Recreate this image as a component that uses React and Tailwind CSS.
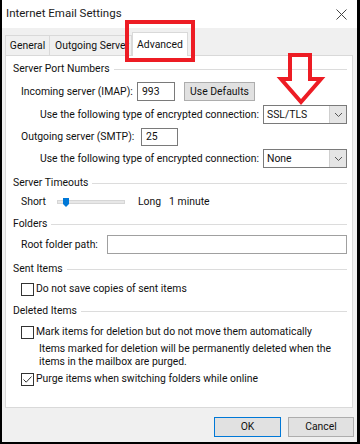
import React from "react";

const font = { fontFamily: 'Roboto, "Noto Sans", sans-serif' };

// --- small pieces ---
const SectionHeader = ({ title, className = "" }) => (
  <div className={`flex items-center h-[18px] pl-[7px] pr-[5px] whitespace-nowrap ${className}`}>
    <span>{title}</span>
    <div className="flex-1 ml-[4px] border-t border-[#dcdcdc]" />
  </div>
);

const Checkbox = ({ checked }) => (
  <div className="w-[13px] h-[13px] border border-[#333333] bg-white flex items-center justify-center shrink-0">
    {checked && (
      <svg width="11" height="11" viewBox="0 0 11 11">
        <path d="M1.5 5.5 L4.2 8.2 L9.5 2.5" fill="none" stroke="#333" strokeWidth="1" />
      </svg>
    )}
  </div>
);

const Select = ({ value }) => (
  <div className="w-[84px] h-[19px] border border-[#7a7a7a] bg-white flex items-stretch">
    <span className="flex-1 pl-[3px] leading-[17px]">{value}</span>
    <div className="w-[17px] bg-[#e5e5e5] border-l border-[#cfcfcf] flex items-center justify-center">
      <svg width="9" height="6" viewBox="0 0 9 6">
        <path d="M1 1 L4.5 4.5 L8 1" fill="none" stroke="#555" strokeWidth="1" />
      </svg>
    </div>
  </div>
);

const App = () => {
  return (
    <div
      className="relative w-[360px] h-[444px] bg-[#f0f0f0] border-l-2 border-r-[3px] border-b-2 border-black flex flex-col text-[10.4px] text-[#111] overflow-hidden"
      style={font}
    >
      {/* Title bar */}
      <div className="h-[28px] bg-white flex items-center justify-between pl-[4px] pr-[10px] shrink-0">
        <span className="text-[11.5px] text-[#1a1a1a]">Internet Email Settings</span>
        <svg width="11" height="11" viewBox="0 0 11 11">
          <path d="M0.5 0.5 L10.5 10.5 M10.5 0.5 L0.5 10.5" stroke="#444" strokeWidth="1" />
        </svg>
      </div>

      {/* Tabs */}
      <div className="h-[27px] flex items-end pl-[3px] shrink-0 whitespace-nowrap">
        <div className="w-[45px] h-[20px] border border-b-0 border-[#d9d9d9] flex items-center justify-center">General</div>
        <div className="w-[82px] h-[20px] border-t border-r border-[#d9d9d9] flex items-center pl-[5px] overflow-hidden">
          Outgoing Server
        </div>
        <div className="w-[56px] h-[24px] -mb-px bg-white border border-b-0 border-[#d9d9d9] flex items-center justify-center relative z-10">
          Advanced
        </div>
      </div>

      {/* Panel */}
      <div className="ml-[3px] w-[348px] h-[353px] bg-white border border-[#d9d9d9] flex flex-col shrink-0 whitespace-nowrap">
        <SectionHeader title="Server Port Numbers" className="mt-[4px]" />

        <div className="flex items-center h-[19px] mt-[4px] pl-[15px]">
          <span className="w-[116px]">Incoming server (IMAP):</span>
          <div className="w-[38px] h-[19px] border border-[#7a7a7a] pl-[4px] leading-[17px]">993</div>
          <div className="ml-[9px] w-[71px] h-[19px] bg-[#e1e1e1] border border-[#adadad] flex items-center justify-center">
            Use Defaults
          </div>
        </div>

        <div className="flex items-center h-[19px] mt-[4px] pl-[34px]">
          <span className="flex-1">Use the following type of encrypted connection:</span>
          <div className="mr-[5px]">
            <Select value="SSL/TLS" />
          </div>
        </div>

        <div className="flex items-center h-[18px] mt-[4px] pl-[15px]">
          <span className="w-[120px]">Outgoing server (SMTP):</span>
          <div className="w-[37px] h-[18px] border border-[#7a7a7a] pl-[4px] leading-[16px]">25</div>
        </div>

        <div className="flex items-center h-[19px] mt-[3px] pl-[34px]">
          <span className="flex-1">Use the following type of encrypted connection:</span>
          <div className="mr-[5px]">
            <Select value="None" />
          </div>
        </div>

        <SectionHeader title="Server Timeouts" className="mt-[6px]" />

        <div className="flex items-center h-[18px] mt-[1px] pl-[15px]">
          <span className="w-[36px]">Short</span>
          <div className="relative w-[68px] h-[10px] flex items-center">
            <div className="w-full h-[4px] bg-[#e7e7e7] border border-[#d6d6d6]" />
            <svg className="absolute left-[6px] top-[1px]" width="6" height="9" viewBox="0 0 6 9">
              <path d="M0 0 H6 V6 L3 9 L0 6 Z" fill="#0078d7" />
            </svg>
          </div>
          <span className="ml-[13px]">Long</span>
          <span className="ml-[8px]">1 minute</span>
        </div>

        <SectionHeader title="Folders" className="mt-[4px]" />

        <div className="flex items-center h-[19px] mt-[2px] pl-[15px] pr-[5px]">
          <span className="w-[86px]">Root folder path:</span>
          <div className="flex-1 h-[19px] border border-[#a0a0a0]" />
        </div>

        <SectionHeader title="Sent Items" className="mt-[6px]" />

        <div className="flex items-center h-[18px] mt-[2px] pl-[15px] gap-[2px]">
          <Checkbox />
          <span>Do not save copies of sent items</span>
        </div>

        <SectionHeader title="Deleted Items" className="mt-[4px]" />

        <div className="flex items-center h-[18px] mt-[3px] pl-[15px] gap-[2px]">
          <Checkbox />
          <span>Mark items for deletion but do not move them automatically</span>
        </div>

        <div className="mt-[1px] pl-[33px] leading-[13px]">
          Items marked for deletion will be permanently deleted when the
          <br />
          items in the mailbox are purged.
        </div>

        <div className="flex items-center h-[18px] mt-[2px] pl-[15px] gap-[2px]">
          <Checkbox checked />
          <span>Purge items when switching folders while online</span>
        </div>
      </div>

      {/* Buttons */}
      <div className="flex justify-end gap-[7px] mt-[9px] pr-[3px]">
        <div className="w-[67px] h-[20px] bg-[#e1e1e1] border border-[#0078d7] flex items-center justify-center">OK</div>
        <div className="w-[66px] h-[20px] bg-[#e1e1e1] border border-[#adadad] flex items-center justify-center">Cancel</div>
      </div>

      {/* Annotations */}
      <div className="absolute left-[123px] top-[20px] w-[70px] h-[42px] border-4 border-[#ed1c24] z-20" />
      <svg className="absolute left-[274px] top-[50px] z-20" width="50" height="56" viewBox="0 0 50 56">
        <path
          d="M14 5 H34 V29 H45 L25 52 L5 29 H14 Z"
          fill="none"
          stroke="#ed1c24"
          strokeWidth="4"
          strokeLinejoin="miter"
        />
      </svg>
    </div>
  );
};

export default App;
